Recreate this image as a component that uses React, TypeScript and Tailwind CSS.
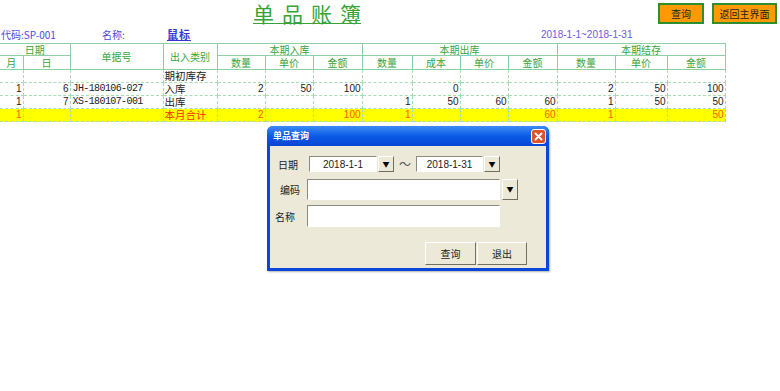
import React from 'react';

const CJK = { fontFamily: '"Noto Sans CJK SC", "Noto Sans", sans-serif' };

const COLS = [23, 47, 93, 54, 48, 48, 49, 50, 48, 48, 49, 58, 52, 58];

type Row = {
  cells: string[];
  total?: boolean;
};

const ROWS: Row[] = [
  { cells: ['', '', '', '期初库存', '', '', '', '', '', '', '', '', '', ''] },
  { cells: ['1', '6', 'JH-180106-027', '入库', '2', '50', '100', '', '0', '', '', '2', '50', '100'] },
  { cells: ['1', '7', 'XS-180107-001', '出库', '', '', '', '1', '50', '60', '60', '1', '50', '50'] },
  { cells: ['1', '', '', '本月合计', '2', '', '100', '1', '', '', '60', '1', '', '50'], total: true },
];

const SUB_HEADS = ['数量', '单价', '金额', '数量', '成本', '单价', '金额', '数量', '单价', '金额'];

function DropButton({ h }: { h: string }) {
  return (
    <div
      className={`w-[16px] ${h} bg-[#ece9d8] border border-t-white border-l-white border-b-[#716f64] border-r-[#716f64] flex items-center justify-center text-[7px] text-black`}
    >
      ▼
    </div>
  );
}

function QueryDialog() {
  return (
    <div className="ml-[267px] mt-[4px] w-[282px] h-[145px] bg-[#0a46d8] rounded-t-[6px] px-[3px] pb-[3px] flex flex-col shadow-[1px_1px_2px_rgba(0,0,0,0.3)]">
      <div className="h-[20px] -mx-[3px] rounded-t-[6px] bg-gradient-to-b from-[#3d8cf7] via-[#0a5ae6] to-[#0846d4] flex items-center justify-between pl-[6px] pr-[3px]">
        <span className="text-[9px] font-bold text-white" style={CJK}>
          单品查询
        </span>
        <div className="w-[15px] h-[15px] rounded-[3px] border border-white bg-[#e0522a] flex items-center justify-center">
          <svg width="9" height="9" viewBox="0 0 9 9">
            <path d="M1.5 1.5 L7.5 7.5 M7.5 1.5 L1.5 7.5" stroke="white" strokeWidth="1.8" strokeLinecap="round" />
          </svg>
        </div>
      </div>
      <div className="flex-1 bg-[#ece9d8] flex flex-col text-[10px] text-[#222]" style={CJK}>
        <div className="flex items-center mt-[10px] h-[16px]">
          <span className="w-[39px] pl-[8px]">日期</span>
          <div className="w-[68px] h-[16px] bg-white border border-t-[#8d8a80] border-l-[#8d8a80] border-b-white border-r-white flex items-center justify-center text-[10px]" style={{ fontFamily: '"Liberation Sans", sans-serif' }}>
            2018-1-1
          </div>
          <div className="ml-[1px]">
            <DropButton h="h-[16px]" />
          </div>
          <span className="w-[22px] text-center text-[12px] text-[#555]">～</span>
          <div className="w-[67px] h-[16px] bg-white border border-t-[#8d8a80] border-l-[#8d8a80] border-b-white border-r-white flex items-center justify-center text-[10px]" style={{ fontFamily: '"Liberation Sans", sans-serif' }}>
            2018-1-31
          </div>
          <div className="ml-[1px]">
            <DropButton h="h-[16px]" />
          </div>
        </div>
        <div className="flex items-center mt-[7px] h-[21px]">
          <span className="w-[37px] pl-[10px]">编码</span>
          <div className="w-[193px] h-[21px] bg-white border border-t-[#8d8a80] border-l-[#8d8a80] border-b-white border-r-white" />
          <div className="ml-[2px]">
            <DropButton h="h-[21px]" />
          </div>
        </div>
        <div className="flex items-center mt-[5px] h-[22px]">
          <span className="w-[37px] pl-[5px]">名称</span>
          <div className="w-[193px] h-[22px] bg-white border border-t-[#8d8a80] border-l-[#8d8a80] border-b-white border-r-white" />
        </div>
        <div className="flex mt-[15px] ml-[155px] gap-[1px]">
          <div className="w-[51px] h-[23px] border border-t-white border-l-white border-b-[#716f64] border-r-[#716f64] flex items-center justify-center">
            查询
          </div>
          <div className="w-[50px] h-[23px] border border-t-white border-l-white border-b-[#716f64] border-r-[#716f64] flex items-center justify-center">
            退出
          </div>
        </div>
      </div>
    </div>
  );
}

export default function App() {
  const head = 'border border-[#8fcfa4] text-[#3aa53a] text-[10px] font-normal leading-none p-0 text-center';
  const cellBase = 'border border-dashed border-[#a9dcb4] p-0 leading-none whitespace-nowrap overflow-visible';

  return (
    <div className="w-[780px] h-[391px] bg-white overflow-hidden" style={CJK}>
      <div className="flex items-start h-[27px] pt-[1px]">
        <div className="ml-[253px] text-[21px] leading-[25px] underline underline-offset-[1px] decoration-1 text-[#35a335]">
          <span className="tracking-[8px]">单品账</span>
          <span>簿</span>
        </div>
        <div className="ml-auto mr-[3px] mt-[2px] flex gap-[8px]">
          <div className="w-[46px] h-[21px] bg-[#ff9900] border-2 border-[#2f8f2f] flex items-center justify-center text-[10px] text-[#222]">
            查询
          </div>
          <div className="w-[65px] h-[21px] bg-[#ff9900] border-2 border-[#2f8f2f] flex items-center justify-center text-[10px] text-[#222]">
            返回主界面
          </div>
        </div>
      </div>
      <div className="flex items-start h-[16px] pt-[1px] text-[10px] leading-[13px] text-[#4b4be0]">
        <span className="w-[102px] pl-[1px]">代码:SP-001</span>
        <span className="w-[65px]">名称:</span>
        <span className="w-[374px] text-[11px] font-bold tracking-[1px] underline text-[#3636d0]">鼠标</span>
        <span className="text-[10px] text-[#6a5ce6]" style={{ fontFamily: '"Liberation Sans", sans-serif' }}>
          2018-1-1~2018-1-31
        </span>
      </div>
      <table className="table-fixed border-collapse w-[725px]">
        <colgroup>
          {COLS.map((w, i) => (
            <col key={i} style={{ width: w }} />
          ))}
        </colgroup>
        <thead>
          <tr className="h-[12px]">
            <th colSpan={2} className={`${head} border-l-0`}>日期</th>
            <th rowSpan={2} className={head}>单据号</th>
            <th rowSpan={2} className={head}>出入类别</th>
            <th colSpan={3} className={head}>本期入库</th>
            <th colSpan={4} className={head}>本期出库</th>
            <th colSpan={3} className={head}>本期结存</th>
          </tr>
          <tr className="h-[14px]">
            <th className={`${head} border-l-0`}>月</th>
            <th className={head}>日</th>
            {SUB_HEADS.map((s, i) => (
              <th key={i} className={head}>
                {s}
              </th>
            ))}
          </tr>
        </thead>
        <tbody>
          {ROWS.map((row, ri) => (
            <tr key={ri} className={`h-[13px] ${row.total ? 'bg-[#ffff00]' : ''}`}>
              {row.cells.map((c, ci) => {
                const color = row.total ? (ci === 3 ? 'text-[#ff2a00]' : 'text-[#ff5a00]') : 'text-[#222]';
                if (ci === 2) {
                  return (
                    <td key={ci} className={`${cellBase} ${color} text-left pl-[2px] text-[10px] tracking-[-0.6px]`} style={{ fontFamily: '"Liberation Mono", monospace' }}>
                      {c}
                    </td>
                  );
                }
                if (ci === 3) {
                  return (
                    <td key={ci} className={`${cellBase} ${color} text-left pl-[1px] text-[10.5px] leading-[11px]`}>
                      {c}
                    </td>
                  );
                }
                return (
                  <td
                    key={ci}
                    className={`${cellBase} ${color} ${ci === 0 ? 'border-l-0' : ''} text-right pr-[1px] text-[10px]`}
                    style={{ fontFamily: '"Liberation Sans", sans-serif' }}
                  >
                    {c}
                  </td>
                );
              })}
            </tr>
          ))}
        </tbody>
      </table>
      <QueryDialog />
    </div>
  );
}
